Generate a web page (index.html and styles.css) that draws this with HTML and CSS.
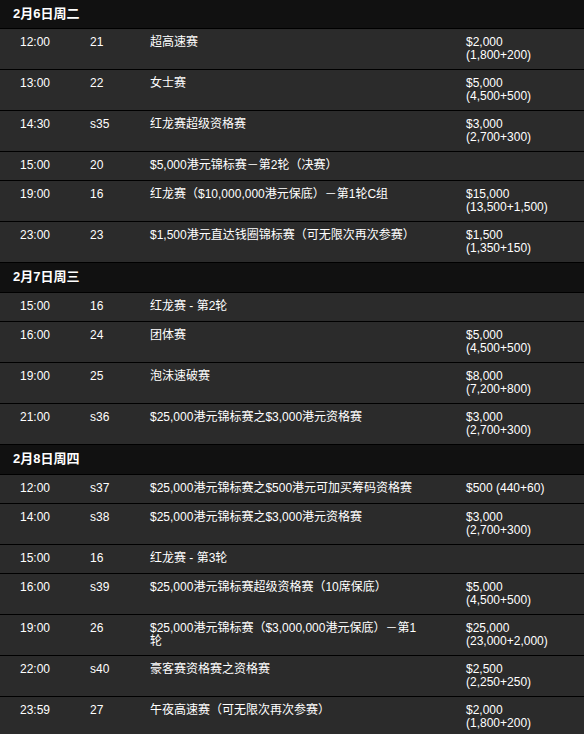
FILE: index.html
```html
<!DOCTYPE html>
<html lang="zh-CN">
<head>
<meta charset="utf-8">
<link rel="stylesheet" href="styles.css">
</head>
<body>
<table class="schedule">
  <colgroup>
    <col class="c-time"><col class="c-num"><col class="c-event"><col class="c-buy">
  </colgroup>
  <tbody>
    <tr class="day first"><th colspan="4">2月6日周二</th></tr>
    <tr><td class="time">12:00</td><td>21</td><td class="event">超高速赛</td><td>$2,000<br>(1,800+200)</td></tr>
    <tr><td class="time">13:00</td><td>22</td><td class="event">女士赛</td><td>$5,000<br>(4,500+500)</td></tr>
    <tr><td class="time">14:30</td><td>s35</td><td class="event">红龙赛超级资格赛</td><td>$3,000<br>(2,700+300)</td></tr>
    <tr><td class="time">15:00</td><td>20</td><td class="event">$5,000港元锦标赛－第2轮（决赛）</td><td></td></tr>
    <tr><td class="time">19:00</td><td>16</td><td class="event">红龙赛（$10,000,000港元保底）－第1轮C组</td><td>$15,000<br>(13,500+1,500)</td></tr>
    <tr><td class="time">23:00</td><td>23</td><td class="event">$1,500港元直达钱圈锦标赛（可无限次再次参赛）</td><td>$1,500<br>(1,350+150)</td></tr>

    <tr class="day"><th colspan="4">2月7日周三</th></tr>
    <tr><td class="time">15:00</td><td>16</td><td class="event">红龙赛 - 第2轮</td><td></td></tr>
    <tr><td class="time">16:00</td><td>24</td><td class="event">团体赛</td><td>$5,000<br>(4,500+500)</td></tr>
    <tr><td class="time">19:00</td><td>25</td><td class="event">泡沫速破赛</td><td>$8,000<br>(7,200+800)</td></tr>
    <tr><td class="time">21:00</td><td>s36</td><td class="event">$25,000港元锦标赛之$3,000港元资格赛</td><td>$3,000<br>(2,700+300)</td></tr>

    <tr class="day"><th colspan="4">2月8日周四</th></tr>
    <tr><td class="time">12:00</td><td>s37</td><td class="event">$25,000港元锦标赛之$500港元可加买筹码资格赛</td><td>$500 (440+60)</td></tr>
    <tr><td class="time">14:00</td><td>s38</td><td class="event">$25,000港元锦标赛之$3,000港元资格赛</td><td>$3,000<br>(2,700+300)</td></tr>
    <tr><td class="time">15:00</td><td>16</td><td class="event">红龙赛 - 第3轮</td><td></td></tr>
    <tr><td class="time">16:00</td><td>s39</td><td class="event">$25,000港元锦标赛超级资格赛（10席保底）</td><td>$5,000<br>(4,500+500)</td></tr>
    <tr><td class="time">19:00</td><td>26</td><td class="event">$25,000港元锦标赛（$3,000,000港元保底）－第1轮</td><td>$25,000<br>(23,000+2,000)</td></tr>
    <tr><td class="time">22:00</td><td>s40</td><td class="event">豪客赛资格赛之资格赛</td><td>$2,500<br>(2,250+250)</td></tr>
    <tr><td class="time">23:59</td><td>27</td><td class="event">午夜高速赛（可无限次再次参赛）</td><td>$2,000<br>(1,800+200)</td></tr>
  </tbody>
</table>
</body>
</html>
```
FILE: styles.css
```css
html, body {
  margin: 0;
  padding: 0;
  background: #2b2b2b;
}

.schedule {
  width: 584px;
  border-collapse: collapse;
  table-layout: fixed;
  font-family: "Liberation Sans", Arial, "Noto Sans CJK SC", sans-serif;
  font-size: 12px;
  line-height: 13px;
  color: #ffffff;
}

.c-time { width: 90px; }
.c-num { width: 60px; }
.c-event { width: 316px; }
.c-buy { width: 118px; }

.schedule td {
  height: 14px;
  background: #2b2b2b;
  border-bottom: 1px solid #000;
  padding: 7px 0;
  vertical-align: top;
  text-align: left;
}

.schedule td.time {
  padding-left: 20px;
}

.schedule td.event {
  padding-right: 40px;
}

.day th {
  background: #111111;
  border-bottom: 1px solid #000;
  padding: 7px 0 8px 13px;
  text-align: left;
  font-size: 13px;
  font-weight: bold;
  line-height: 14px;
}

.day.first th {
  padding-bottom: 7px;
}
```
